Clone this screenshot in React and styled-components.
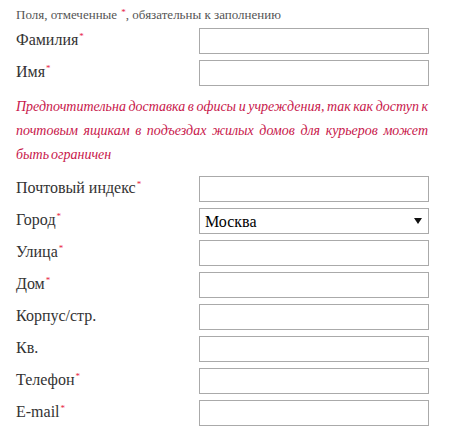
import React from "react";
import styled, { createGlobalStyle } from "styled-components";

const GlobalStyle = createGlobalStyle`
  body {
    margin: 0;
    background: #fff;
  }
`;

const serif = `"Liberation Serif", "Times New Roman", serif`;

const Form = styled.form`
  width: 464px;
  padding: 7px 0 0 16px;
  box-sizing: border-box;
  font-family: ${serif};
`;

const Note = styled.div`
  font-family: ${serif};
  font-size: 13px;
  line-height: 16px;
  color: #555;
  margin-bottom: 5px;
`;

const Star = styled.sup`
  color: #e8213f;
  font-size: 9px;
  line-height: 0;
  vertical-align: ${props => (props.small ? "4px" : "6px")};
  margin-left: 1px;
`;

const Row = styled.div`
  display: grid;
  grid-template-columns: 183px 230px;
  align-items: center;
  height: 26px;
  margin-bottom: 6px;
`;

const Label = styled.label`
  font-family: ${serif};
  font-size: 16px;
  color: #333;
  line-height: 20px;
  margin-top: -3px;
`;

const Input = styled.input`
  box-sizing: border-box;
  width: 230px;
  height: 26px;
  border: 1px solid #aaa;
  border-radius: 0;
  padding: 0 5px;
  font-family: ${serif};
  font-size: 16px;
  outline: none;
`;

const SelectWrap = styled.div`
  position: relative;
  width: 230px;
  height: 26px;
`;

const Select = styled.select`
  appearance: none;
  box-sizing: border-box;
  width: 230px;
  height: 26px;
  border: 1px solid #aaa;
  border-radius: 0;
  background: #fff;
  padding: 0 5px;
  font-family: ${serif};
  font-size: 16px;
  color: #000;
  outline: none;
`;

const Arrow = styled.svg`
  position: absolute;
  right: 7px;
  top: 10px;
  pointer-events: none;
`;

const Warning = styled.p`
  margin: 9px 0 9px;
  width: 412px;
  font-family: ${serif};
  font-size: 14px;
  line-height: 24px;
  font-style: italic;
  word-spacing: -1.5px;
  text-align: justify;
  color: #c8174b;
`;

const Field = ({ label, required }) => (
  <Row>
    <Label>
      {label}
      {required && <Star>*</Star>}
    </Label>
    <Input type="text" />
  </Row>
);

export default function App() {
  return (
    <>
      <GlobalStyle />
      <Form>
        <Note>
          Поля, отмеченные <Star small>*</Star>, обязательны к заполнению
        </Note>
        <Field label="Фамилия" required />
        <Field label="Имя" required />
        <Warning>
          Предпочтительна доставка в офисы и учреждения, так как доступ к
          почтовым ящикам в подъездах жилых домов для курьеров может быть
          ограничен
        </Warning>
        <Field label="Почтовый индекс" required />
        <Row>
          <Label>
            Город<Star>*</Star>
          </Label>
          <SelectWrap>
            <Select defaultValue="msk">
              <option value="msk">Москва</option>
              <option value="spb">Санкт-Петербург</option>
            </Select>
            <Arrow width="8" height="6" viewBox="0 0 8 6">
              <path d="M0 0h8L4 6z" fill="#111" />
            </Arrow>
          </SelectWrap>
        </Row>
        <Field label="Улица" required />
        <Field label="Дом" required />
        <Field label="Корпус/стр." />
        <Field label="Кв." />
        <Field label="Телефон" required />
        <Field label="E-mail" required />
      </Form>
    </>
  );
}
